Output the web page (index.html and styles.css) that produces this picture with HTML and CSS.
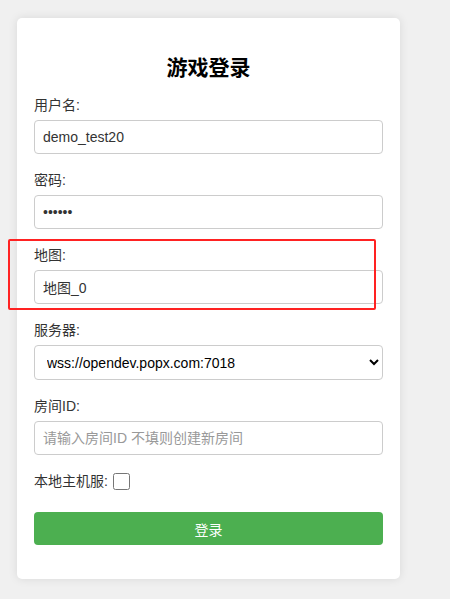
FILE: index.html
```html
<!DOCTYPE html>
<html lang="zh-CN">
<head>
    <meta charset="UTF-8">
    <meta name="viewport" content="width=device-width, initial-scale=1.0">
    <title>游戏登录</title>
    <link rel="stylesheet" href="styles.css">
</head>
<body>

<div class="login-container">
    <h2 class="login-title">游戏登录</h2>

    <div class="form-group">
        <label for="username">用户名:</label>
        <input type="text" id="username" value="demo_test20">
    </div>

    <div class="form-group">
        <label for="password">密码:</label>
        <input type="password" id="password" value="123456">
    </div>

    <div class="form-group">
        <label for="map">地图:</label>
        <input type="text" id="map" value="地图_0">
    </div>

    <div class="form-group">
        <label for="server">服务器:</label>
        <select id="server">
            <option>wss://opendev.popx.com:7018</option>
        </select>
    </div>

    <div class="form-group">
        <label for="roomId">房间ID:</label>
        <input type="text" id="roomId" placeholder="请输入房间ID 不填则创建新房间">
    </div>

    <div class="form-group inline">
        <label for="localHost">本地主机服:</label>
        <input type="checkbox" id="localHost">
    </div>

    <button class="login-button">登录</button>
</div>

<!-- выделение поля карты -->
<div class="highlight"></div>

</body>
</html>
```

FILE: styles.css
```css
body {
    font-family: "Liberation Sans", Arial, "Noto Sans CJK SC", sans-serif;
    margin: 0;
    padding: 18px 17px;
    background: #f0f0f0;
    color: #333;
}

.login-container {
    width: 383px;
    box-sizing: border-box;
    background: #fff;
    padding: 17px 17px 34px;
    border-radius: 5px;
    box-shadow: 0 0 10px rgba(0, 0, 0, 0.1);
}

.login-title {
    font-size: 21px;
    line-height: 28px;
    text-align: center;
    color: #000;
    margin: 19px 0 13px;
}

.form-group {
    margin-bottom: 16px;
}

.form-group label {
    display: block;
    font-size: 14px;
    line-height: 20px;
    margin-bottom: 5px;
}

.form-group input[type="text"],
.form-group input[type="password"],
.form-group select {
    width: 100%;
    height: 34px;
    box-sizing: border-box;
    padding: 8px;
    border: 1px solid #ccc;
    border-radius: 4px;
    font-family: inherit;
    font-size: 14px;
    color: #333;
    background: #fff;
}

.form-group select {
    height: 35px;
    padding-left: 8px;
    color: #000;
}

.form-group input::placeholder {
    color: #999;
}

.form-group.inline {
    display: flex;
    align-items: center;
    margin-bottom: 21px;
}

.form-group.inline label {
    display: inline;
    margin: 0;
}

.form-group input[type="checkbox"] {
    width: 17px;
    height: 17px;
    margin: 0 0 0 5px;
}

.login-button {
    display: block;
    width: 100%;
    height: 33px;
    background: #4CAF50;
    color: white;
    border: none;
    border-radius: 4px;
    font-family: inherit;
    font-size: 14px;
    cursor: pointer;
}

.login-button:hover {
    background: #45a049;
}

.highlight {
    position: absolute;
    left: 8px;
    top: 239px;
    width: 364px;
    height: 67px;
    border: 2px solid #f22;
    border-radius: 2px;
    pointer-events: none;
}
```
